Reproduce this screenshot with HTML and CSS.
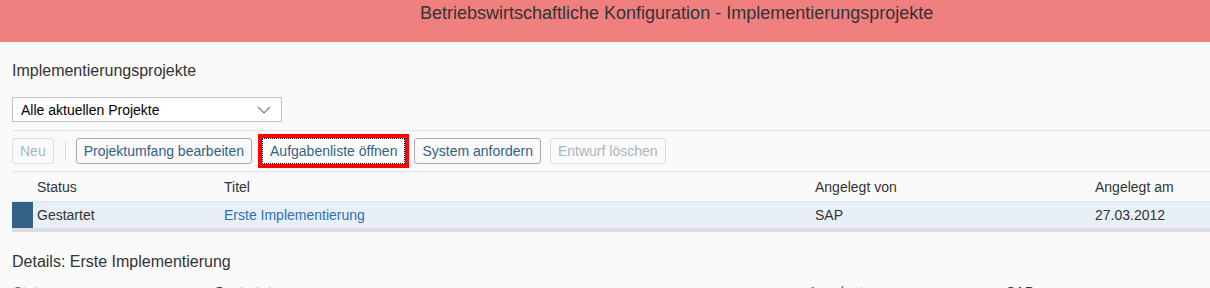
FILE: index.html
```html
<!DOCTYPE html>
<html lang="de">
<head>
<meta charset="utf-8">
<title>Implementierungsprojekte</title>
<link rel="stylesheet" href="styles.css">
</head>
<body>
<header class="shell">
  <h1 class="shell-title">Betriebswirtschaftliche Konfiguration - Implementierungsprojekte</h1>
</header>
<main class="page">
  <h2 class="section-title">Implementierungsprojekte</h2>
  <div class="select">
    <span class="select-text">Alle aktuellen Projekte</span>
    <svg class="chev" width="14" height="8" viewBox="0 0 14 8"><path d="M1 1 L7 7 L13 1" fill="none" stroke="#6a7d90" stroke-width="1.2"/></svg>
  </div>
  <div class="toolbar">
    <button class="btn disabled">Neu</button>
    <span class="sep"></span>
    <button class="btn">Projektumfang bearbeiten</button>
    <button class="btn focused">Aufgabenliste öffnen</button>
    <button class="btn">System anfordern</button>
    <button class="btn disabled">Entwurf löschen</button>
  </div>
  <div class="table">
    <div class="row head">
      <span class="mark"></span>
      <span class="c1">Status</span>
      <span class="c2">Titel</span>
      <span class="c3">Angelegt von</span>
      <span class="c4">Angelegt am</span>
    </div>
    <div class="row sel">
      <span class="mark"></span>
      <span class="c1">Gestartet</span>
      <span class="c2 link">Erste Implementierung</span>
      <span class="c3">SAP</span>
      <span class="c4">27.03.2012</span>
    </div>
  </div>
  <h2 class="details-title">Details: Erste Implementierung</h2>
  <div class="details">
    <span class="d1 label">Status</span>
    <span class="d2">Gestartet</span>
    <span class="d3 label">Angelegt von</span>
    <span class="d4">SAP</span>
  </div>
</main>
</body>
</html>
```
FILE: styles.css
```css
html, body { margin: 0; padding: 0; }
body {
  background: #fafafa;
  font-family: "Liberation Sans", Arial, sans-serif;
  color: #333;
  width: 1210px;
  height: 288px;
  overflow: hidden;
}
.shell {
  background: #f08080;
  height: 42px;
  padding-left: 420px;
  box-sizing: border-box;
}
.shell-title {
  margin: 0;
  font-size: 18px;
  font-weight: normal;
  line-height: 24px;
  padding-top: 1px;
  color: #333;
}
.page { padding: 0 0 0 12px; }
.section-title {
  margin: 0;
  padding-top: 19px;
  font-size: 16px;
  font-weight: normal;
  line-height: 20px;
  color: #333;
}
.select {
  margin-top: 16px;
  width: 270px;
  height: 25px;
  box-sizing: border-box;
  border: 1px solid #bfbfbf;
  background: #fff;
  display: flex;
  align-items: center;
  justify-content: space-between;
  padding: 0 10px 0 8px;
}
.select-text { font-size: 14px; color: #000; }
.chev { display: block; }
.toolbar {
  margin-top: 8px;
  border-top: 1px solid #e5e5e5;
  border-bottom: 1px solid #e5e5e5;
  height: 42px;
  box-sizing: border-box;
  display: flex;
  align-items: center;
  gap: 9px;
}
.btn {
  font-family: "Liberation Sans", Arial, sans-serif;
  font-size: 14px;
  height: 26px;
  padding: 0 7px;
  background: #fafafa;
  border: 1px solid #ababab;
  border-radius: 3px;
  color: #346187;
  line-height: 24px;
  box-sizing: border-box;
}
.btn.disabled { border-color: #dcdcdc; color: #a9b6c2; }
.sep {
  width: 1px;
  height: 18px;
  background: #f2d7c8;
  margin: 0 1px 0 2px;
}
.btn.focused {
  border: 1px dotted #000;
  border-radius: 0;
  background: #fdfdfd;
  outline: 4px solid #ff0000;
  margin: 0 0 0 1px;
  padding: 0 7px;
}
.table { font-size: 14px; }
.row {
  display: flex;
  align-items: center;
}
.row.head {
  height: 29px;
  border-bottom: 1px solid #e5e5e5;
}
.row.sel {
  height: 26px;
  background: #e8eff7;
  border-bottom: 4px solid #dcdcdc;
  align-items: stretch;
}
.row.sel span { display: flex; align-items: center; }
.mark { width: 21px; flex: none; }
.row.sel .mark { background: #346187; }
.c1 { margin-left: 4px; width: 187px; flex: none; }
.c2 { width: 591px; flex: none; }
.c3 { width: 280px; flex: none; }
.c4 { flex: none; }
.link { color: #2f6fb5; }
.details-title {
  margin: 0;
  padding-top: 20px;
  font-size: 16px;
  font-weight: normal;
  line-height: 20px;
  color: #333;
}
.details {
  display: flex;
  font-size: 14px;
  margin-top: 12px;
  line-height: 16px;
}
.label { color: #666; }
.d1 { width: 201px; flex: none; margin-left: 1px; }
.d2 { width: 594px; flex: none; }
.d3 { width: 198px; flex: none; }
```
